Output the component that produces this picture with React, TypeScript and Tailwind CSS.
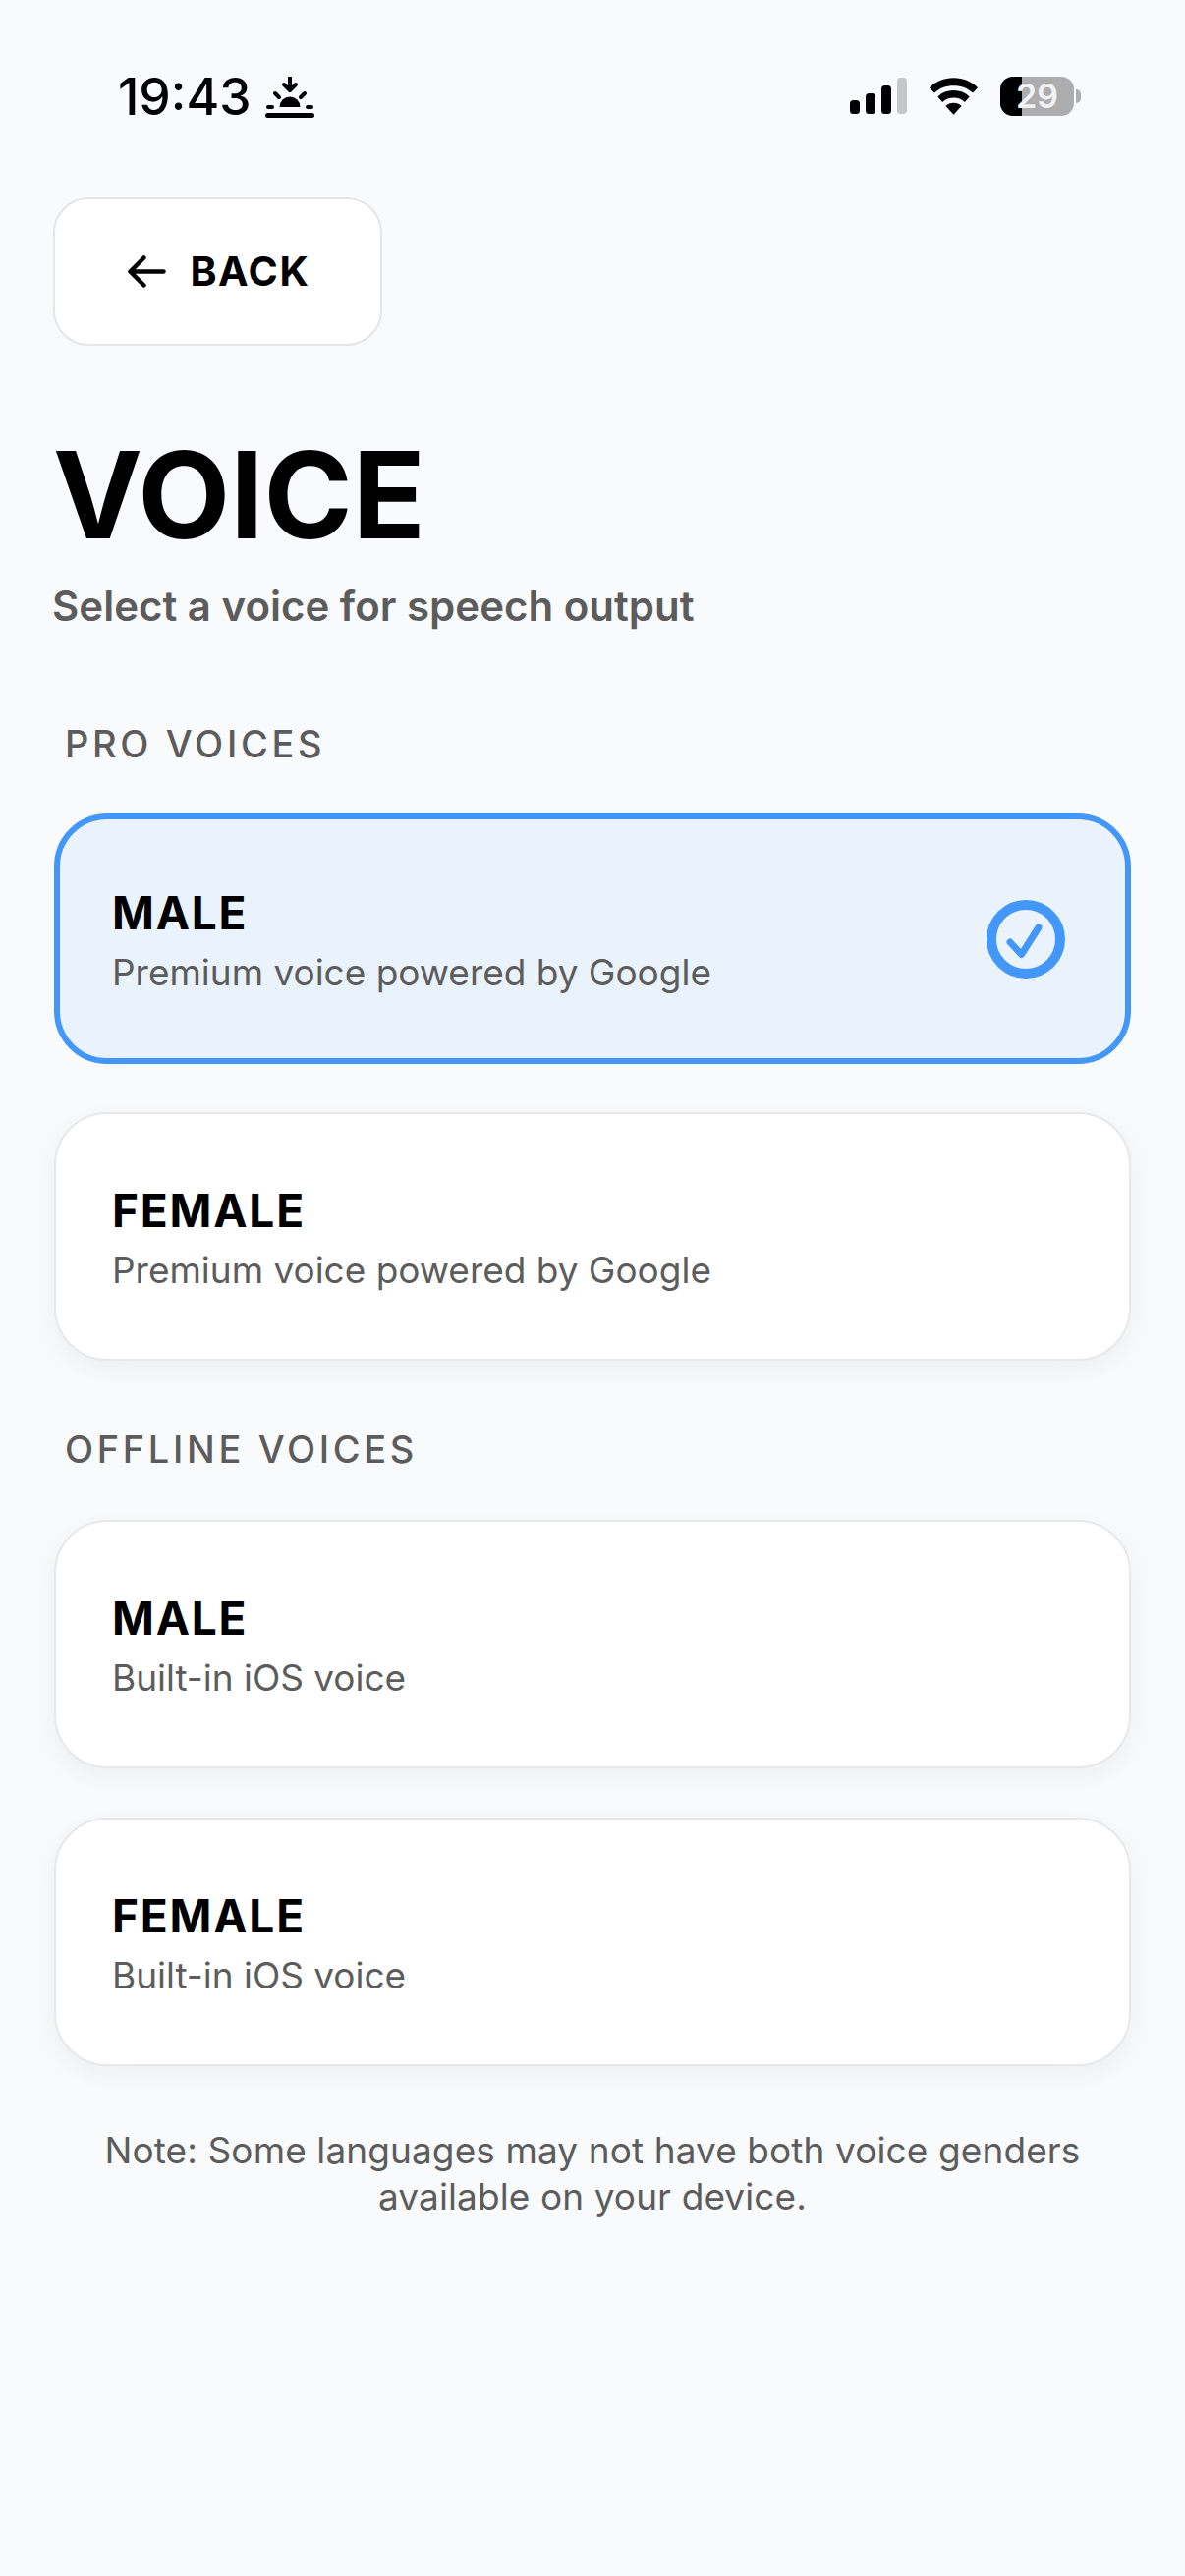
import React from 'react';

type Voice = {
  id: string;
  name: string;
  description: string;
  selected?: boolean;
};

const proVoices: Voice[] = [
  { id: 'pro-male', name: 'MALE', description: 'Premium voice powered by Google', selected: true },
  { id: 'pro-female', name: 'FEMALE', description: 'Premium voice powered by Google' },
];

const offlineVoices: Voice[] = [
  { id: 'off-male', name: 'MALE', description: 'Built-in iOS voice' },
  { id: 'off-female', name: 'FEMALE', description: 'Built-in iOS voice' },
];

const StatusBar = () => (
  <div className="flex h-[60px] items-center justify-between pl-[120px] pr-[106px]">
    <div className="flex items-center gap-[14px]">
      <span className="text-[51.5px] leading-[60px] font-medium text-black">19:43</span>
      <svg width="50" height="42" viewBox="0 0 50 42" className="mt-[2px]">
        <path d="M25 1v12" stroke="#000" strokeWidth="4" strokeLinecap="round" />
        <path d="M19 8l6 6 6-6" stroke="#000" strokeWidth="4" fill="none" strokeLinecap="round" strokeLinejoin="round" />
        <path d="M14.500 31a10.500 10.500 0 0 1 21 0z" fill="#000" />
        <path d="M10 17l4 4M40 17l-4 4M3 31h4M43 31h4" stroke="#000" strokeWidth="4" strokeLinecap="round" />
        <rect x="0" y="37" width="50" height="5" rx="2.500" fill="#000" />
      </svg>
    </div>
    <div className="flex items-center gap-[22px]">
      <svg width="58" height="38" viewBox="0 0 58 38">
        <rect x="0" y="23" width="10" height="14" rx="3.500" fill="#000" />
        <rect x="16" y="16" width="10" height="21" rx="3.500" fill="#000" />
        <rect x="32" y="8" width="10" height="29" rx="3.500" fill="#000" />
        <rect x="48" y="0" width="10" height="37" rx="3.500" fill="#c7c7c9" />
      </svg>
      <svg width="51" height="38" viewBox="0 0 52 38">
        <path d="M26 0C16 0 8 3.500 1 10l5 5.500C11.500 10.500 18 8 26 8s14.500 2.500 20 7.500l5-5.500C44 3.500 36 0 26 0z" fill="#000" />
        <path d="M26 13c-6.500 0-12 2.200-16.500 6.500l5 5.500c3-3 7-4.500 11.500-4.500S34.500 22 37.500 25l5-5.500C38 15.200 32.500 13 26 13z" fill="#000" />
        <path d="M26 26c-3.300 0-6 1-8.200 3.200L26 38l8.200-8.800C32 27 29.300 26 26 26z" fill="#000" />
      </svg>
      <div className="flex items-center gap-[2px]">
        <div className="relative flex h-[40px] w-[75px] items-center justify-center overflow-hidden rounded-[13px] bg-[#adadaf]">
          <div className="absolute inset-y-0 left-0 w-[22px] bg-black" />
          <span className="relative text-[34px] leading-none font-semibold text-[#f2f2f3]">29</span>
        </div>
        <div className="h-[14px] w-[5px] rounded-r-full bg-[#adadaf]" />
      </div>
    </div>
  </div>
);

const VoiceCard = ({ voice }: { voice: Voice }) => (
  <div
    className={
      voice.selected
        ? 'flex h-[255px] items-center justify-between rounded-[54px] border-[6px] border-[#4397f9] bg-[#eaf3fc] pl-[53px] pr-[61px]'
        : 'flex h-[253px] items-center justify-between rounded-[54px] border-2 border-[#e8e8ea] bg-white pl-[57px] pr-[65px] shadow-[0_8px_30px_rgba(0,0,0,0.05)]'
    }
  >
    <div className="flex flex-col pt-[4px]">
      <span className="text-[46px] leading-[54px] font-bold tracking-[1.8px] text-black">{voice.name}</span>
      <span className="mt-[10px] text-[37px] leading-[48px] tracking-[-0.02px] text-[#5c5c5c]">{voice.description}</span>
    </div>
    {voice.selected && (
      <svg width="80" height="80" viewBox="0 0 80 80">
        <circle cx="40" cy="40" r="35" fill="none" stroke="#4397f9" strokeWidth="10" />
        <path d="M24 43l11.500 12.500L53 28" fill="none" stroke="#4397f9" strokeWidth="7" strokeLinecap="round" strokeLinejoin="round" />
      </svg>
    )}
  </div>
);

const SectionLabel = ({ children }: { children: React.ReactNode }) => (
  <h2 className="pl-[11px] text-[38px] leading-[44px] font-medium tracking-[3.65px] text-[#5c5c5c]">{children}</h2>
);

export default function App() {
  return (
    <div
      className="flex min-h-[2622px] w-[1206px] flex-col bg-[#f9fafc] pt-[68px]"
      style={{ fontFamily: 'Inter, sans-serif' }}
    >
      <StatusBar />
      <div className="flex flex-col px-[55px] pt-[73px]">
        <button className="-ml-[1px] flex h-[151px] w-[335px] items-center justify-center gap-[24px] rounded-[36px] border-2 border-[#e5e5e7] bg-white pl-[3px]">
          <svg width="39" height="33" viewBox="0 0 39 33">
            <path d="M36.500 16.500H2.500M16.500 2.500L2.500 16.500L16.500 30.500" fill="none" stroke="#000" strokeWidth="4.500" strokeLinecap="round" strokeLinejoin="round" />
          </svg>
          <span className="text-[41px] leading-none font-bold tracking-[1.6px] text-black">BACK</span>
        </button>
        <h1 className="mt-[79px] -ml-[1px] text-[122px] leading-[146px] font-bold text-black">VOICE</h1>
        <p className="mt-[15px] -ml-[2px] text-[42px] leading-[50px] font-semibold text-[#5c5c5c]">Select a voice for speech output</p>

        <div className="mt-[93px]">
          <SectionLabel>PRO VOICES</SectionLabel>
        </div>
        <div className="mt-[49px] flex flex-col gap-[49px]">
          {proVoices.map((voice) => (
            <VoiceCard key={voice.id} voice={voice} />
          ))}
        </div>

        <div className="mt-[68px]">
          <SectionLabel>OFFLINE VOICES</SectionLabel>
        </div>
        <div className="mt-[50px] flex flex-col gap-[50px]">
          {offlineVoices.map((voice) => (
            <VoiceCard key={voice.id} voice={voice} />
          ))}
        </div>

        <p className="mt-[62px] text-center text-[37px] leading-[47px] tracking-[0.1px] text-[#5c5c5c]">
          Note: Some languages may not have both voice genders
          <br />
          available on your device.
        </p>
      </div>
    </div>
  );
}
